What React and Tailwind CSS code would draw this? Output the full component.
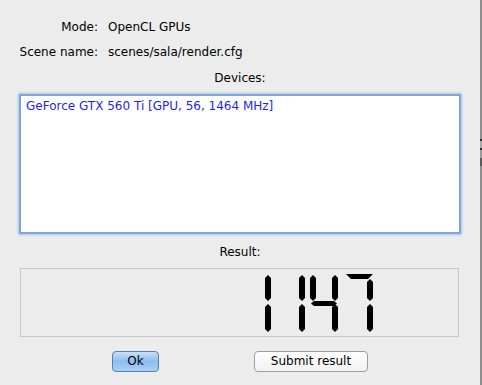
import React from 'react';

const font = { fontFamily: '"DejaVu Sans", "Liberation Sans", sans-serif' };

// points for a vertical LCD segment, 6px wide
const vseg = (x, y0, y1) =>
  `${x + 3},${y0} ${x + 6},${y0 + 3} ${x + 6},${y1 - 3} ${x + 3},${y1} ${x},${y1 - 3} ${x},${y0 + 3}`;

// points for a horizontal LCD segment, 5px tall
const hseg = (x0, x1, y) =>
  `${x0},${y + 2.5} ${x0 + 3},${y} ${x1 - 3},${y} ${x1},${y + 2.5} ${x1 - 3},${y + 5} ${x0 + 3},${y + 5}`;

const segments = [
  // 1
  vseg(265, 275, 301),
  vseg(265, 304, 332),
  // 1
  vseg(299, 275, 301),
  vseg(299, 304, 332),
  // 4
  vseg(310, 275, 301),
  hseg(311, 337, 301),
  vseg(332, 275, 301),
  vseg(332, 304, 332),
  // 7
  '346,274 373,274 368,279 351,279',
  vseg(367, 279, 301),
  vseg(367, 304, 332),
];

const LcdNumber = () => (
  <svg width="437" height="67" viewBox="21 269 437 67" className="block">
    {segments.map((p, i) => (
      <polygon key={i} points={p} fill="#000" />
    ))}
  </svg>
);

const App = () => {
  return (
    <div className="w-[482px] h-[385px] bg-[#ececec] flex text-[12px] text-black" style={font}>
      <div className="w-[480px] flex flex-col">
        {/* Mode / scene rows */}
        <div className="grid grid-cols-[98px_1fr] gap-x-[10px] gap-y-[9px] pt-[19px] leading-[16px]">
          <span className="text-right">Mode:</span>
          <span>OpenCL GPUs</span>
          <span className="text-right">Scene name:</span>
          <span>scenes/sala/render.cfg</span>
        </div>

        <div className="mt-[10px] text-center leading-[16px]">Devices:</div>

        {/* Device list */}
        <div className="mt-[8px] ml-[19px] mr-[19px] h-[140px] bg-white border-2 border-[#7fa8d9] shadow-[0_0_2px_1px_#a9c6ea] pl-[5px] pt-[3px]">
          <div className="text-[#1f1ff0] leading-[15px]">GeForce GTX 560 Ti [GPU, 56, 1464 MHz]</div>
        </div>

        <div className="mt-[10px] text-center leading-[16px]">Result:</div>

        {/* LCD result */}
        <div className="mt-[8px] ml-[20px] mr-[21px] h-[69px] border border-[#c6c6c6] bg-[#ececec]">
          <LcdNumber />
        </div>

        {/* Buttons */}
        <div className="mt-[14px] flex pl-[112px] gap-[95px]">
          <button className="w-[47px] h-[21px] rounded-[4px] border border-[#5b7fb3] bg-gradient-to-b from-[#c9e0f8] via-[#8dbcef] to-[#a9d0f6] leading-[19px] text-[12px]">
            Ok
          </button>
          <button className="w-[114px] h-[21px] rounded-[4px] border border-[#9d9d9d] bg-gradient-to-b from-white to-[#f1f1f1] leading-[19px] text-[12px]">
            Submit result
          </button>
        </div>
      </div>

      {/* edge of the window behind */}
      <div className="w-[2px] flex flex-col bg-[#8e8e8e]">
        <div className="h-[139px]" />
        <div className="h-[2px] bg-[#2e2e2e]" />
        <div className="h-[7px] bg-[#a8a8a8]" />
        <div className="h-[2px] bg-[#2e2e2e]" />
        <div className="h-[8px] bg-[#9a9a9a]" />
        <div className="h-[8px] bg-[#5a5a5a]" />
      </div>
    </div>
  );
};

export default App;
